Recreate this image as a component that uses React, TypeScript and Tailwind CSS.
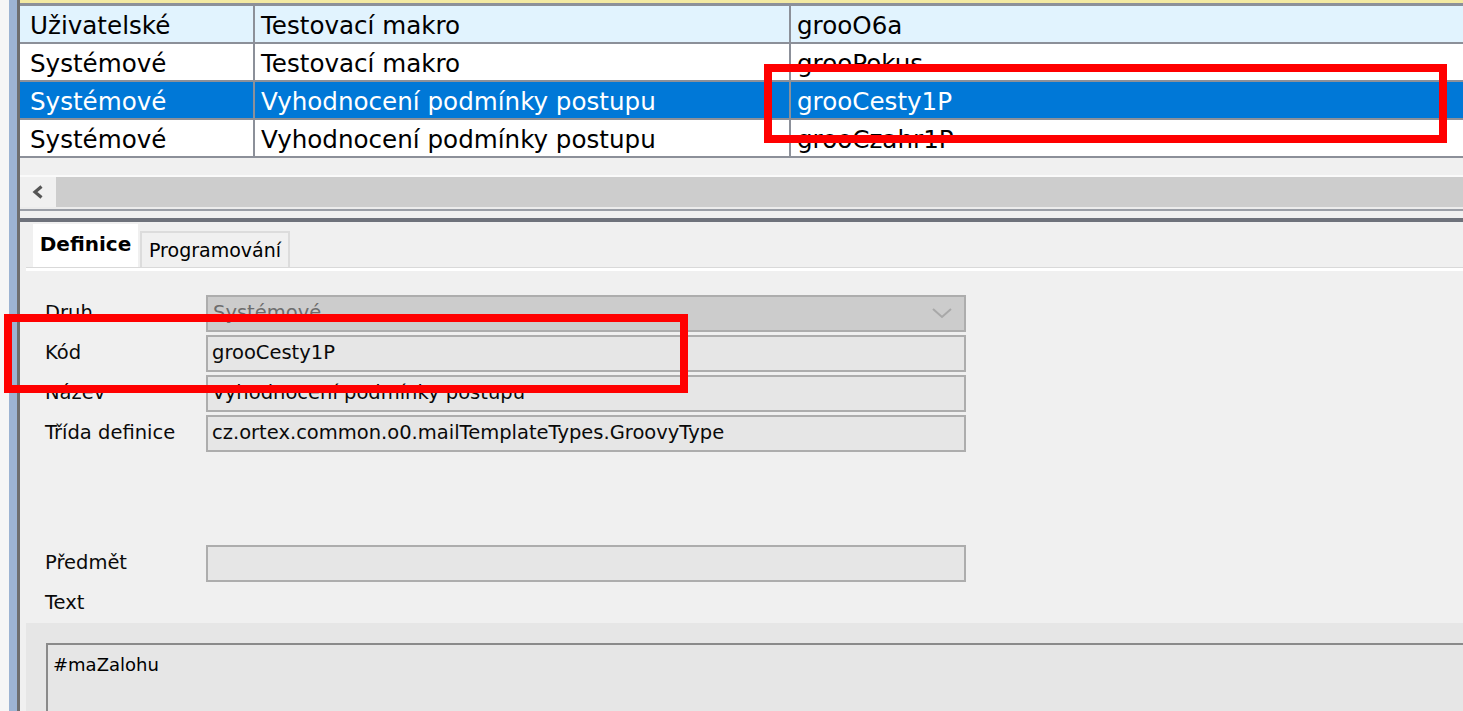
const rows = [
  { kind: "Uživatelské", name: "Testovací makro", code: "grooO6a", tone: "alt" },
  { kind: "Systémové", name: "Testovací makro", code: "grooPokus", tone: "plain" },
  { kind: "Systémové", name: "Vyhodnocení podmínky postupu", code: "grooCesty1P", tone: "sel" },
  { kind: "Systémové", name: "Vyhodnocení podmínky postupu", code: "grooCzahr1P", tone: "plain" },
];

function Field({ label, value, select }: { label: string; value: string; select?: boolean }) {
  return (
    <div className="flex items-center h-[40px]">
      <div className="w-[161px] text-[19.5px] text-[#0a0a0a]">{label}</div>
      <div
        className={
          select
            ? "w-[760px] h-[37px] border-2 border-[#adadad] bg-[#cccccc] flex items-center justify-between px-[5px] text-[#6d6d6d]"
            : "w-[760px] h-[37px] border-2 border-[#adadad] bg-[#e6e6e6] flex items-center px-[4px] text-[#0a0a0a]"
        }
      >
        <span className="text-[19.5px]">{value}</span>
        {select && (
          <svg width="22" height="14" viewBox="0 0 22 14" className="mr-[6px]">
            <path d="M2 3 L11 11 L20 3" fill="none" stroke="#a8a8a8" strokeWidth="2" />
          </svg>
        )}
      </div>
    </div>
  );
}

export default function App() {
  return (
    <div className="relative w-[1463px] h-[711px] overflow-hidden flex bg-white font-['DejaVu_Sans',sans-serif]">
      {/* window edge */}
      <div className="w-[9px] bg-[#f6f6f6]" />
      <div className="w-[8px] bg-[#9db4d3]" />
      <div className="w-[3px] bg-[#6f6f6f]" />

      <div className="flex-1 flex flex-col min-w-0">
        {/* grid */}
        <div className="h-[3px] bg-[#f3e9a2]" />
        <div className="h-[3px] bg-[#8c9099]" />
        {rows.map((r, i) => {
          const bg = r.tone === "sel" ? "bg-[#0078d7] text-white" : r.tone === "alt" ? "bg-[#e1f3fe] text-black" : "bg-white text-black";
          return (
            <div key={i} className={`flex h-[38px] border-b-2 border-[#8c9099] text-[24.6px] leading-none ${bg}`}>
              <div className="w-[235px] flex items-center pl-[10px] pt-[5px] border-r-2 border-[#8c9099] whitespace-nowrap">{r.kind}</div>
              <div className="w-[536px] flex items-center pl-[6px] pt-[5px] border-r-2 border-[#8c9099] whitespace-nowrap">{r.name}</div>
              <div className="flex-1 flex items-center pl-[6px] pt-[5px] whitespace-nowrap">{r.code}</div>
            </div>
          );
        })}
        <div className="h-[17px] bg-[#f0f0f0]" />
        <div className="h-[2px] bg-[#fafafa]" />
        {/* horizontal scrollbar */}
        <div className="h-[30px] flex bg-[#cdcdcd]">
          <div className="w-[36px] bg-[#f0f0f0] flex items-center justify-center">
            <svg width="14" height="16" viewBox="0 0 14 16">
              <path d="M10.5 2.5 L4 8 L10.5 13.5" fill="none" stroke="#555" strokeWidth="3.2" />
            </svg>
          </div>
        </div>
        <div className="h-[2px] bg-[#ececec]" />
        <div className="h-[2px] bg-[#9a9ea6]" />
        <div className="h-[7px] bg-[#f0f0f0]" />
        <div className="h-[4px] bg-[#6e727b]" />

        {/* detail pane */}
        <div className="flex-1 flex flex-col bg-[#f0f0f0] pl-[6px]">
          <div className="h-[46px] flex items-end pl-[7px] border-b border-[#d9d9d9]">
            <div className="w-[105px] h-[43px] bg-white flex items-center justify-center text-[20px] font-bold text-black pb-[4px]">
              Definice
            </div>
            <div className="ml-[2px] w-[150px] h-[36px] bg-[#f0f0f0] border-2 border-b-0 border-[#dcdcdc] flex items-center justify-center text-[19px] text-black">
              Programování
            </div>
          </div>
          <div className="h-[3px] bg-white" />

          <div className="flex flex-col pl-[19px] pt-[22px]">
            <Field label="Druh" value="Systémové" select />
            <Field label="Kód" value="grooCesty1P" />
            <Field label="Název" value="Vyhodnocení podmínky postupu" />
            <Field label="Třída definice" value="cz.ortex.common.o0.mailTemplateTypes.GroovyType" />
            <div className="h-[90px]" />
            <Field label="Předmět" value="" />
            <div className="h-[40px] flex items-center text-[19.5px] text-[#0a0a0a]">Text</div>
          </div>

          <div className="flex-1 bg-[#e6e6e6] pt-[20px] pl-[20px]">
            <div className="h-full border-t-2 border-l-2 border-[#8a8a8a] bg-[#e6e6e6] px-[5px] pt-[6px] text-[18px] text-black">
              #maZalohu
            </div>
          </div>
        </div>
      </div>

      {/* annotation boxes */}
      <div className="absolute left-[764px] top-[64px] w-[683px] h-[79px] border-[8px] border-[#ff0000]" />
      <div className="absolute left-[4px] top-[314px] w-[684px] h-[79px] border-[8px] border-[#ff0000]" />
    </div>
  );
}
